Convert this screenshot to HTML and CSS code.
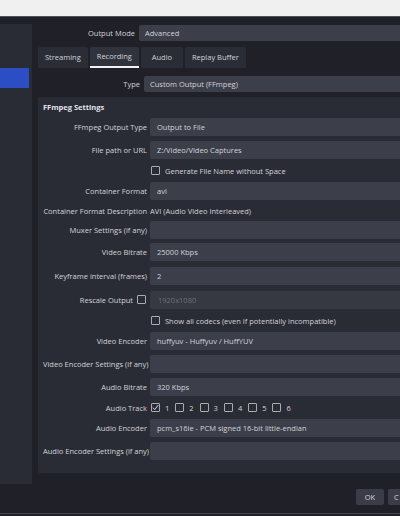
FILE: index.html
```html
<!DOCTYPE html>
<html>
<head>
<meta charset="utf-8">
<link rel="stylesheet" href="styles.css">
</head>
<body>
<div class="topbar"></div>
<div class="window">
  <div class="sidebar"><div class="side-sel"></div></div>
  <div class="main">
    <div class="mode-row">
      <div class="mode-label">Output Mode</div>
      <div class="combo">Advanced</div>
    </div>
    <div class="tabs">
      <div class="tab">Streaming</div>
      <div class="tab active">Recording</div>
      <div class="tab min">Audio</div>
      <div class="tab">Replay Buffer</div>
    </div>
    <div class="type-row">
      <div class="type-label">Type</div>
      <div class="combo">Custom Output (FFmpeg)</div>
    </div>
    <div class="group">
      <div class="group-title">FFmpeg Settings</div>
      <div class="form">
        <div class="row"><div class="lbl">FFmpeg Output Type</div><div class="field">Output to File</div></div>
        <div class="row"><div class="lbl">File path or URL</div><div class="field">Z:/Video/Video Captures</div></div>
        <div class="row text"><div class="lbl"></div><div class="checkline"><span class="cb"></span><span>Generate File Name without Space</span></div></div>
        <div class="row"><div class="lbl">Container Format</div><div class="field">avi</div></div>
        <div class="row short"><div class="lbl">Container Format Description</div><div class="value">AVI (Audio Video Interleaved)</div></div>
        <div class="row mid"><div class="lbl">Muxer Settings (if any)</div><div class="field"></div></div>
        <div class="row"><div class="lbl">Video Bitrate</div><div class="field">25000 Kbps</div></div>
        <div class="row wide"><div class="lbl">Keyframe interval (frames)</div><div class="field">2</div></div>
        <div class="row wide"><div class="lbl lbl-cb"><span>Rescale Output</span><span class="cb"></span></div><div class="field disabled">1920x1080</div></div>
        <div class="row text"><div class="lbl"></div><div class="checkline"><span class="cb"></span><span>Show all codecs (even if potentially incompatible)</span></div></div>
        <div class="row"><div class="lbl">Video Encoder</div><div class="field">huffyuv - Huffyuv / HuffYUV</div></div>
        <div class="row"><div class="lbl">Video Encoder Settings (if any)</div><div class="field"></div></div>
        <div class="row"><div class="lbl">Audio Bitrate</div><div class="field">320 Kbps</div></div>
        <div class="row text"><div class="lbl">Audio Track</div>
          <div class="tracks">
            <span class="cb checked"><svg viewBox="0 0 9 9" width="9" height="9"><polyline points="1.8,4.6 3.7,6.6 7.4,2" fill="none" stroke="#d8d9de" stroke-width="1"/></svg></span><span class="num">1</span>
            <span class="cb"></span><span class="num">2</span>
            <span class="cb"></span><span class="num">3</span>
            <span class="cb"></span><span class="num">4</span>
            <span class="cb"></span><span class="num">5</span>
            <span class="cb"></span><span class="num">6</span>
          </div>
        </div>
        <div class="row"><div class="lbl">Audio Encoder</div><div class="field">pcm_s16le - PCM signed 16-bit little-endian</div></div>
        <div class="row"><div class="lbl">Audio Encoder Settings (if any)</div><div class="field"></div></div>
      </div>
    </div>
  </div>
</div>
<div class="footer">
  <div class="btn">OK</div>
  <div class="btn cut-btn"><span class="cut-text">C</span></div>
</div>
</body>
</html>
```
FILE: styles.css
```css
html, body {
  margin: 0;
  padding: 0;
}
body {
  width: 400px;
  height: 516px;
  overflow: hidden;
  background: #1f2028;
  font-family: "Open Sans", "Noto Sans", sans-serif;
  font-size: 7.5px;
  color: #d2d3d9;
}
.topbar {
  height: 16px;
  background: #f0f0f0;
  border-bottom: 1px solid #50525a;
}
.window {
  display: flex;
  width: 460px;
  height: 467px;
}
.sidebar {
  width: 32px;
  flex: none;
  margin-top: 7px;
  height: 460px;
  background: #2a2c35;
}
.side-sel {
  margin-top: 44px;
  width: 29px;
  height: 20px;
  background: #2b4ec4;
}
.main {
  flex: 1;
  padding-left: 6px;
  display: flex;
  flex-direction: column;
}
.mode-row, .type-row {
  display: flex;
  align-items: center;
  height: 16px;
}
.mode-row { margin-top: 8px; }
.mode-label {
  width: 97px;
  text-align: right;
  margin-right: 4px;
}
.type-row { margin-top: 8px; }
.type-label {
  width: 102px;
  text-align: right;
  margin-right: 4px;
}
.combo {
  flex: 1;
  height: 16px;
  line-height: 16px;
  background: #3c3f4a;
  border-radius: 2px;
  padding-left: 6px;
}
.tabs {
  display: flex;
  margin-top: 6px;
  height: 21px;
  gap: 2px;
}
.tab {
  height: 21px;
  line-height: 21px;
  padding: 0 7px;
  background: #2a2c36;
  border-radius: 2px 2px 0 0;
  box-sizing: border-box;
  text-align: center;
}
.tab.min { min-width: 42px; }
.tab.active {
  background: #30323c;
  border-bottom: 2px solid #f2f2f4;
  line-height: 19px;
}
.group {
  margin-top: 5px;
  background: #2a2c35;
  padding-left: 5px;
  padding-bottom: 10px;
  border-radius: 2px;
}
.group-title {
  height: 18.5px;
  line-height: 21px;
  font-weight: 700;
  color: #e2e3e8;
}
.form {
  display: flex;
  flex-direction: column;
}
.row {
  display: grid;
  grid-template-columns: 104px 1fr;
  column-gap: 3px;
  align-items: center;
  height: 23px;
}
.row.text { height: 18px; }
.row.short { height: 16px; }
.row.mid { height: 22px; }
.row.wide { height: 24px; }
.lbl {
  text-align: right;
  white-space: nowrap;
}
.lbl-cb {
  display: flex;
  justify-content: flex-end;
  align-items: center;
  gap: 4px;
  margin-right: 1px;
}
.field {
  height: 18px;
  line-height: 18px;
  background: #3c3f4a;
  border-radius: 2px;
  padding-left: 7px;
  white-space: nowrap;
}
.field.disabled {
  background: #363842;
  color: #6d707a;
  padding-left: 8px;
}
.value {
  white-space: nowrap;
}
.checkline {
  display: flex;
  align-items: center;
  gap: 5px;
  padding-left: 1px;
  white-space: nowrap;
}
.cb {
  display: inline-block;
  width: 9px;
  height: 9px;
  box-sizing: border-box;
  border: 1px solid #a9abb3;
  border-radius: 1px;
  flex: none;
  position: relative;
}
.cb svg {
  position: absolute;
  left: -1px;
  top: -1px;
}
.tracks {
  display: flex;
  align-items: center;
  padding-left: 1px;
}
.tracks .num {
  margin-left: 5px;
  margin-right: 6px;
}
.footer {
  display: flex;
  gap: 4px;
  padding-left: 356px;
  padding-top: 5px;
  height: 24px;
  width: 44px;
  border-bottom: 1px solid #44464f;
  overflow: hidden;
}
.btn {
  width: 28px;
  height: 16px;
  line-height: 16px;
  text-align: center;
  background: #3a3d48;
  border-radius: 2px;
  flex: none;
}
.btn.cut-btn {
  width: 30px;
  text-align: left;
}
.cut-text {
  padding-left: 6px;
}
```
